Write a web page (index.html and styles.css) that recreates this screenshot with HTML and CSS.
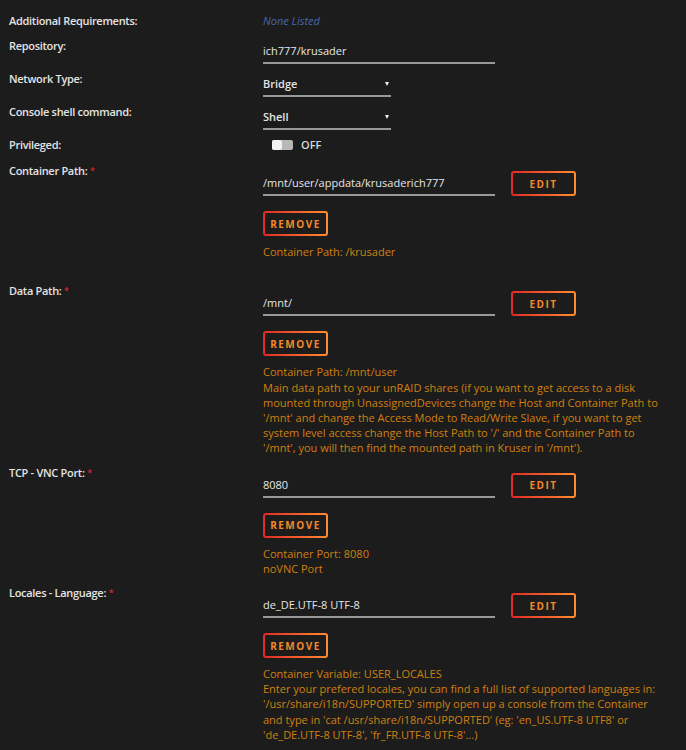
FILE: index.html
```html
<!DOCTYPE html>
<html lang="en">
<head>
<meta charset="utf-8">
<title>Container settings</title>
<link rel="stylesheet" href="styles.css">
</head>
<body>
<div class="form">
  <div class="row row-top">
    <div class="label">Additional Requirements:</div>
    <div class="value"><span class="none">None Listed</span></div>
  </div>

  <div class="row">
    <div class="label">Repository:</div>
    <div class="value"><div class="field field-wide">ich777/krusader</div></div>
  </div>

  <div class="row">
    <div class="label">Network Type:</div>
    <div class="value"><div class="field field-select">Bridge<span class="caret"></span></div></div>
  </div>

  <div class="row">
    <div class="label">Console shell command:</div>
    <div class="value"><div class="field field-select">Shell<span class="caret"></span></div></div>
  </div>

  <div class="row row-switch">
    <div class="label">Privileged:</div>
    <div class="value switch-line"><span class="switch"><span class="knob"></span></span><span class="switch-text">OFF</span></div>
  </div>

  <div class="row config">
    <div class="label">Container Path: <span class="req">*</span></div>
    <div class="value">
      <div class="entry"><div class="field field-wide">/mnt/user/appdata/krusaderich777</div><button class="btn">Edit</button></div>
      <button class="btn btn-remove">Remove</button>
      <div class="help">Container Path: /krusader<br>&nbsp;</div>
    </div>
  </div>

  <div class="row config">
    <div class="label">Data Path: <span class="req">*</span></div>
    <div class="value">
      <div class="entry"><div class="field field-wide">/mnt/</div><button class="btn">Edit</button></div>
      <button class="btn btn-remove">Remove</button>
      <div class="help">Container Path: /mnt/user<br>Main data path to your unRAID shares (if you want to get access to a disk mounted through UnassignedDevices change the Host and Container Path to '/mnt' and change the Access Mode to Read/Write Slave, if you want to get system level access change the Host Path to '/' and the Container Path to '/mnt', you will then find the mounted path in Kruser in '/mnt').</div>
    </div>
  </div>

  <div class="row config">
    <div class="label">TCP - VNC Port: <span class="req">*</span></div>
    <div class="value">
      <div class="entry"><div class="field field-wide">8080</div><button class="btn">Edit</button></div>
      <button class="btn btn-remove">Remove</button>
      <div class="help">Container Port: 8080<br>noVNC Port</div>
    </div>
  </div>

  <div class="row config">
    <div class="label">Locales - Language: <span class="req">*</span></div>
    <div class="value">
      <div class="entry"><div class="field field-wide">de_DE.UTF-8 UTF-8</div><button class="btn">Edit</button></div>
      <button class="btn btn-remove">Remove</button>
      <div class="help">Container Variable: USER_LOCALES<br>Enter your prefered locales, you can find a full list of supported languages in: '/usr/share/i18n/SUPPORTED' simply open up a console from the Container and type in 'cat /usr/share/i18n/SUPPORTED' (eg: 'en_US.UTF-8 UTF8' or 'de_DE.UTF-8 UTF-8', 'fr_FR.UTF-8 UTF-8'...)</div>
    </div>
  </div>
</div>
</body>
</html>
```

FILE: styles.css
```css
html, body {
  margin: 0;
  padding: 0;
  background: #1c1c1c;
}

body {
  font-family: "Open Sans", "Noto Sans", sans-serif;
  font-size: 11px;
  color: #e2e2e2;
}

.form {
  padding: 14px 0 0 9px;
}

.row {
  display: flex;
  margin-bottom: 8px;
}

.row-top {
  margin-bottom: 11px;
}

.row-switch {
  margin-bottom: 10px;
}

.label {
  width: 254px;
  flex: none;
  font-weight: 600;
  line-height: 14px;
  letter-spacing: -0.3px;
  color: #e4e4e4;
}

.req {
  color: #d22a2a;
  font-size: 9px;
  vertical-align: top;
}

.value {
  width: 402px;
  line-height: 14px;
}

.none {
  color: #4a66a8;
  font-style: italic;
}

.field {
  margin-top: 5px;
  padding-bottom: 4px;
  border-bottom: 2px solid #9a9a9a;
  color: #e6e6e6;
  box-sizing: border-box;
}

.field-wide {
  width: 232px;
}

.field-select {
  width: 128px;
  position: relative;
  font-weight: 600;
}

.caret {
  position: absolute;
  right: 2px;
  top: 5px;
  width: 0;
  height: 0;
  border-left: 2.5px solid transparent;
  border-right: 2.5px solid transparent;
  border-top: 4px solid #f0f0f0;
}

.switch-line {
  display: flex;
  align-items: center;
  gap: 8px;
  padding-left: 9px;
}

.switch {
  width: 21px;
  height: 10px;
  border-radius: 2px;
  background: #b8b8b8;
  display: flex;
  align-items: center;
}

.knob {
  width: 10px;
  height: 10px;
  border-radius: 2px;
  background: #f4f4f4;
}

.switch-text {
  font-weight: 600;
  color: #d8d8d8;
}

.config .label {
  padding-top: 2px;
}

.entry {
  display: flex;
  align-items: flex-end;
  gap: 16px;
  margin-top: 9px;
}

.entry .field {
  margin-top: 0;
}

.btn {
  display: block;
  box-sizing: border-box;
  height: 25px;
  width: 65px;
  padding: 0;
  border: 2px solid transparent;
  border-radius: 3px;
  background:
    linear-gradient(#1c1c1c, #1c1c1c) padding-box,
    linear-gradient(90deg, #e22828, #ff8c2f) border-box;
  color: #f2882a;
  font-family: "Open Sans", "Noto Sans", sans-serif;
  font-size: 10px;
  font-weight: 700;
  letter-spacing: 1.5px;
  text-transform: uppercase;
}

.btn-remove {
  margin-top: 15px;
}

.help {
  margin-top: 8px;
  line-height: 15.2px;
  color: #d0800e;
}
```
